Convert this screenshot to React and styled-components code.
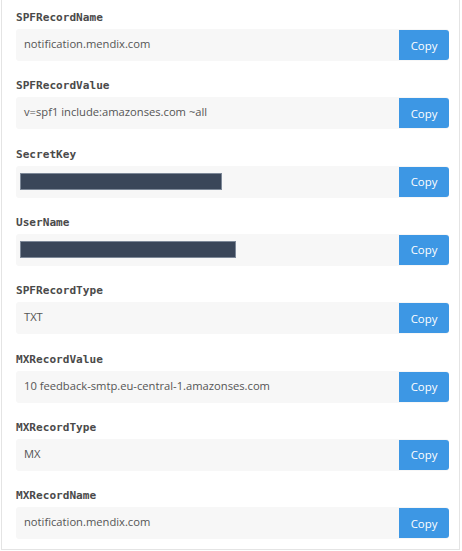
import React from "react";
import styled, { createGlobalStyle } from "styled-components";

const GlobalStyle = createGlobalStyle`
  html, body {
    margin: 0;
    padding: 0;
    background: #ffffff;
  }
  * {
    box-sizing: border-box;
  }
`;

const records = [
  { name: "SPFRecordName", value: "notification.mendix.com" },
  { name: "SPFRecordValue", value: "v=spf1 include:amazonses.com ~all" },
  { name: "SecretKey", mask: 202 },
  { name: "UserName", mask: 216 },
  { name: "SPFRecordType", value: "TXT" },
  { name: "MXRecordValue", value: "10 feedback-smtp.eu-central-1.amazonses.com" },
  { name: "MXRecordType", value: "MX" },
  { name: "MXRecordName", value: "notification.mendix.com" },
];

const App = () => {
  return (
    <>
      <GlobalStyle />
      <Panel>
        {records.map(r => (
          <Item key={r.name}>
            <Label>{r.name}</Label>
            <Field>
              <Value masked={!!r.mask}>
                {r.mask ? <Mask style={{ width: r.mask }} /> : r.value}
              </Value>
              <CopyButton type="button">Copy</CopyButton>
            </Field>
          </Item>
        ))}
      </Panel>
    </>
  );
};

export default App;

const Panel = styled.div`
  margin-left: 1px;
  width: 459px;
  border: 1px solid #e4e4e4;
  border-top: none;
  padding: 10px 10px 10px 14px;
  display: flex;
  flex-direction: column;
  gap: 17.33px;
`;

const Item = styled.div`
  display: flex;
  flex-direction: column;
`;

const Label = styled.div`
  font-family: "DejaVu Sans Mono", monospace;
  font-weight: bold;
  font-size: 11.1px;
  line-height: 16px;
  color: #4a4a4a;
  margin-bottom: 3px;
`;

const Field = styled.div`
  display: flex;
  align-items: center;
  height: 32px;
  background: #f7f7f7;
  border-radius: 3px;
  padding-right: 0;
`;

const Value = styled.div`
  flex: 1;
  display: flex;
  align-items: center;
  padding-left: ${p => (p.masked ? "4px" : "8px")};
  padding-bottom: ${p => (p.masked ? "0" : "3px")};
  font-family: "Open Sans", sans-serif;
  font-size: 11.2px;
  color: #555555;
  white-space: nowrap;
  overflow: hidden;
`;

const Mask = styled.span`
  display: inline-block;
  height: 17px;
  background: #3a4659;
  border: 1px solid #7d8898;
`;

const CopyButton = styled.button`
  width: 50px;
  height: 30px;
  border: none;
  border-radius: 0 3px 3px 0;
  background: #3d97e4;
  color: #ffffff;
  font-family: "Open Sans", sans-serif;
  font-size: 11.4px;
  padding: 0;
  cursor: pointer;
`;
